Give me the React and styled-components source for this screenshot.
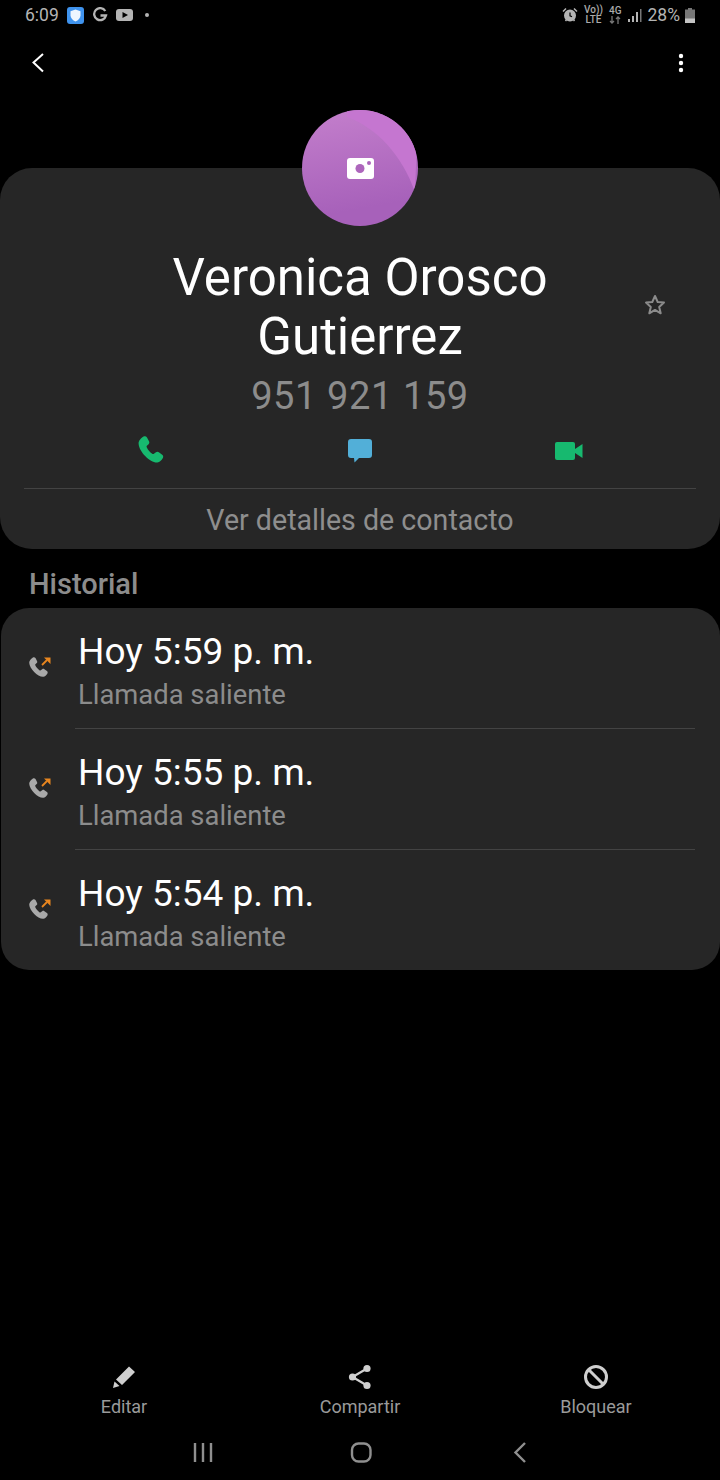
import React from "react";
import styled, { createGlobalStyle } from "styled-components";

const Global = createGlobalStyle`
  html, body { margin: 0; padding: 0; background: #000; }
  * { box-sizing: border-box; }
`;

const Screen = styled.div`
  width: 720px; height: 1480px; background: #000; overflow: hidden;
  display: flex; flex-direction: column;
  font-family: Roboto, "Liberation Sans", sans-serif;
`;
const StatusBar = styled.div`
  height: 30px; padding: 0 25px; display: flex; align-items: center; justify-content: space-between;
  color: #b4b4b4; font-size: 17.5px; flex: none;
`;
const StatusGroup = styled.div`display: flex; align-items: center; gap: ${p => p.$gap ?? 6}px;`;
const SmallStack = styled.div`
  display: flex; flex-direction: column; align-items: center; font-size: 10px; line-height: 10px; font-weight: 500; color: #aaa;
`;
const Toolbar = styled.div`
  height: 64px; padding: 2px 36px 0 30px; display: flex; align-items: center; justify-content: space-between;
  flex: none;
`;
const Avatar = styled.div`
  width: 116px; height: 116px; border-radius: 50%; margin: 16px auto -58px; flex: none;
  position: relative; z-index: 1; overflow: hidden;
  background: linear-gradient(170deg, #c47fcc 0%, #a761ba 80%);
  display: flex; align-items: center; justify-content: center;
`;
const AvatarShine = styled.div`
  position: absolute; inset: 0;
  clip-path: path("M 45 7 C 75 18 100 45 113 82 L 116 0 L 45 0 Z");
  background: #c576d0;
`;
const CameraIcon = styled.svg`position: relative; margin-left: 2px;`;
const ContactCard = styled.section`
  background: #262626; border-radius: 32px; height: 381px; flex: none;
  padding: 80px 24px 0; display: flex; flex-direction: column; align-items: stretch; position: relative;
`;
const Name = styled.h1`
  margin: 0; font-weight: 400; font-size: 51px; line-height: 59px; color: #fff; text-align: center;
`;
const Phone = styled.div`
  font-size: 38px; line-height: 46px; margin-top: 7px; color: #8c8c8c; text-align: center; letter-spacing: 0.6px;
`;
const FavStar = styled.div`
  position: absolute; right: 53px; top: 125px; width: 24px; height: 24px;
`;
const Actions = styled.div`
  display: grid; grid-template-columns: repeat(3, 209px); justify-content: center; margin-top: 12px; height: 40px; align-items: center; justify-items: center;
`;
const Divider = styled.div`height: 1px; background: #434343; margin-top: 18px;`;
const DetailsLink = styled.div`
  height: 60px; line-height: 63px; text-align: center; color: #8e8e8e; font-size: 28.6px;
`;
const SectionTitle = styled.h2`
  margin: 0; padding-left: 29px; height: 59px; display: flex; align-items: center; flex: none;
  padding-top: 10px; font-weight: 500; font-size: 29px; color: #8c8c8c;
`;
const HistoryCard = styled.section`
  background: #262626; border-radius: 28px; margin-left: 1px; height: 362px; flex: none; padding: 0 25px 0 28px;
`;
const Row = styled.div`
  height: 120px; display: grid; grid-template-columns: 22px 1fr; column-gap: 27px; align-items: center;
`;
const RowDivider = styled.div`height: 1px; background: #434343; margin-left: 46px;`;
const RowIcon = styled.div`width: 24px; height: 24px; margin-top: -2px;`;
const RowText = styled.div`display: flex; flex-direction: column; padding-top: 4px;`;
const RowTitle = styled.div`font-size: 37px; line-height: 44px; color: #fff;`;
const RowSub = styled.div`font-size: 27.4px; line-height: 32px; color: #8c8c8c; margin-top: 5px;`;
const BottomBar = styled.div`
  margin-top: auto; height: 74px; display: grid; grid-template-columns: 248px 224px 248px; flex: none;
`;
const BottomAction = styled.div`
  display: flex; flex-direction: column; align-items: center; color: #9a9a9a; font-size: 18px; line-height: 22px; gap: 6px;
`;
const NavBar = styled.div`
  height: 42px; flex: none; display: grid; grid-template-columns: 1fr 1fr 1fr; padding: 0 120px 0 125px; align-items: flex-start; justify-items: center;
`;
const NavSlot = styled.div`width: 28px; height: 28px; margin-top: 1px;`;

const HANDSET = "M6.400 1.200c1-.5 2-.3 2.600.7l1.500 2.800c.4.8.3 1.600-.3 2.200l-1.300 1.200c-.3.3-.3.6-.1 1 .8 1.900 2.600 4 4.400 5.100.4.200.7.200 1-.1l1.500-1.100c.7-.5 1.500-.5 2.200 0l2.500 1.900c.9.7 1 1.700.4 2.600-.9 1.400-2.300 3-4 3.100C11.500 21 3 12.500 2.700 6.500 2.600 4.300 4.800 2.100 6.400 1.200z";

const OutgoingIcon = () => (
  <svg width="24" height="24" viewBox="0 0 24 24">
    <path fill="#a9a9a9" transform="translate(-2.500 1.200)" d={HANDSET} />
    <path stroke="#e8861f" strokeWidth="1.800" fill="none" d="M13 10L18 5" />
    <path fill="#e8861f" d="M15 2.500h6.500V9z" />
  </svg>
);

const entries = ["Hoy 5:59 p. m.", "Hoy 5:55 p. m.", "Hoy 5:54 p. m."];

export default function App() {
  return (
    <Screen>
      <Global />
      <StatusBar>
        <StatusGroup $gap={8}>
          <span>6:09</span>
          <svg width="17" height="17" viewBox="0 0 17 17">
            <rect width="17" height="17" rx="3" fill="#3f93ee" />
            <path fill="#eef6ff" d="M8.500 2.500l5 1.700v4c0 3-2.300 5-5 6.300-2.700-1.300-5-3.300-5-6.300v-4z" />
          </svg>
          <svg width="16" height="16" viewBox="0 0 16 16" fill="none">
            <path stroke="#b4b4b4" strokeWidth="2.300" d="M13.300 4A6 6 0 1 0 14 8.500H8.500" />
          </svg>
          <svg width="18" height="14" viewBox="0 0 18 14">
            <rect y="1" width="17" height="12" rx="3" fill="#b4b4b4" />
            <path fill="#000" d="M6.500 4l5.500 3-5.500 3z" />
          </svg>
          <svg width="14" height="6" viewBox="0 0 14 6"><circle cx="5" cy="3" r="2" fill="#b4b4b4" /></svg>
        </StatusGroup>
        <StatusGroup $gap={6}>
          <svg width="16" height="16" viewBox="0 0 16 16" fill="none">
            <circle cx="8" cy="8.500" r="5" stroke="#b4b4b4" strokeWidth="2" fill="#b4b4b4" />
            <path stroke="#000" strokeWidth="1.200" d="M8 5.500v3.300l2 1" />
            <path stroke="#b4b4b4" strokeWidth="1.500" d="M1 4.500L4 1.500M15 4.500L12 1.500M3.500 14l1-1.500M12.500 14l-1-1.500" />
          </svg>
          <SmallStack><span>Vo))</span><span>LTE</span></SmallStack>
          <SmallStack>
            <span>4G</span>
            <svg width="12" height="8" viewBox="0 0 12 8" fill="none">
              <path stroke="#777" strokeWidth="1.300" d="M3 0v7M1 5l2 2 2-2M9 8V1M7 3l2-2 2 2" />
            </svg>
          </SmallStack>
          <svg width="14" height="15" viewBox="0 0 14 15">
            <rect x="0" y="11" width="2" height="3" fill="#b4b4b4" />
            <rect x="4" y="8" width="2" height="6" fill="#b4b4b4" />
            <rect x="8" y="4" width="2" height="10" fill="#b4b4b4" />
            <rect x="12" y="1" width="1.500" height="13" fill="#777" />
          </svg>
          <StatusGroup $gap={5}>
            <span>28%</span>
            <svg width="10" height="15" viewBox="0 0 10 15">
              <path fill="#777" d="M3 0h4v1.500h3V15H0V1.500h3z" />
              <rect y="10.500" width="10" height="4.500" fill="#c4c4c4" />
            </svg>
          </StatusGroup>
        </StatusGroup>
      </StatusBar>

      <Toolbar>
        <svg width="16" height="22" viewBox="0 0 16 22" fill="none">
          <path stroke="#fff" strokeWidth="2" d="M13 2L3.500 10.500 13 19.500" />
        </svg>
        <svg width="6" height="20" viewBox="0 0 6 20">
          <circle cx="3" cy="3" r="2.200" fill="#fff" />
          <circle cx="3" cy="10" r="2.200" fill="#fff" />
          <circle cx="3" cy="17" r="2.200" fill="#fff" />
        </svg>
      </Toolbar>

      <Avatar>
        <AvatarShine />
        <CameraIcon width="28" height="21" viewBox="0 0 28 21">
          <rect width="27" height="21" rx="3" fill="#fff" />
          <circle cx="13" cy="10.500" r="4.500" fill="#ad66bc" />
          <circle cx="22" cy="5" r="2" fill="#ad66bc" />
        </CameraIcon>
      </Avatar>

      <ContactCard>
        <Name>Veronica Orosco<br />Gutierrez</Name>
        <Phone>951 921 159</Phone>
        <FavStar>
          <svg width="24" height="24" viewBox="0 0 24 24" fill="none">
            <path stroke="#8b8b8b" strokeWidth="2" strokeLinejoin="round" d="M12 3l2.700 6 6.300.6-4.800 4.300 1.500 6.400-5.700-3.400-5.700 3.400 1.500-6.400L3 9.600 9.300 9z" />
          </svg>
        </FavStar>
        <Actions>
          <svg width="32" height="32" viewBox="0 0 24 24"><path fill="#17b96f" d={HANDSET} /></svg>
          <svg width="26" height="26" viewBox="0 0 26 26">
            <path fill="#52afd8" d="M4 1h18a3 3 0 0 1 3 3v13a3 3 0 0 1-3 3H12l-4.500 4.500L7 20H4a3 3 0 0 1-3-3V4a3 3 0 0 1 3-3z" />
          </svg>
          <svg width="28" height="18" viewBox="0 0 28 18">
            <rect width="20" height="18" rx="2" fill="#17b96f" />
            <path fill="#17b96f" d="M20 7l7.500-5v14L20 11z" />
          </svg>
        </Actions>
        <Divider />
        <DetailsLink>Ver detalles de contacto</DetailsLink>
      </ContactCard>

      <SectionTitle>Historial</SectionTitle>

      <HistoryCard>
        {entries.map((t, i) => (
          <React.Fragment key={t}>
            {i > 0 && <RowDivider />}
            <Row>
              <RowIcon><OutgoingIcon /></RowIcon>
              <RowText>
                <RowTitle>{t}</RowTitle>
                <RowSub>Llamada saliente</RowSub>
              </RowText>
            </Row>
          </React.Fragment>
        ))}
      </HistoryCard>

      <BottomBar>
        <BottomAction>
          <svg width="26" height="26" viewBox="0 0 26 26">
            <path fill="#cfcfcf" d="M18 2.500l6 5.500L11 21l-6-5.500zM3.500 17.500l5 4.500-6.500 2z" />
          </svg>
          Editar
        </BottomAction>
        <BottomAction>
          <svg width="26" height="26" viewBox="0 0 26 26">
            <g fill="#cfcfcf">
              <circle cx="20" cy="4.500" r="3.600" /><circle cx="5.500" cy="13" r="3.600" /><circle cx="20" cy="21.500" r="3.600" />
            </g>
            <path stroke="#cfcfcf" strokeWidth="2.200" d="M20 4.500L5.500 13 20 21.500" fill="none" />
          </svg>
          Compartir
        </BottomAction>
        <BottomAction>
          <svg width="26" height="26" viewBox="0 0 26 26" fill="none">
            <circle cx="13" cy="13" r="10.500" stroke="#cfcfcf" strokeWidth="3" />
            <path stroke="#cfcfcf" strokeWidth="3" d="M6 6l14 14" />
          </svg>
          Bloquear
        </BottomAction>
      </BottomBar>

      <NavBar>
        <NavSlot>
          <svg width="28" height="28" viewBox="0 0 28 28"><path stroke="#8f8f8f" strokeWidth="2.400" d="M5 4v19M13 4v19M21 4v19" /></svg>
        </NavSlot>
        <NavSlot>
          <svg width="28" height="28" viewBox="0 0 28 28" fill="none"><rect x="4" y="4.500" width="18.500" height="18" rx="6.500" stroke="#8f8f8f" strokeWidth="2.400" /></svg>
        </NavSlot>
        <NavSlot>
          <svg width="28" height="28" viewBox="0 0 28 28" fill="none"><path stroke="#8f8f8f" strokeWidth="2.400" d="M18 4l-9.500 9.500L18 23" /></svg>
        </NavSlot>
      </NavBar>
    </Screen>
  );
}
